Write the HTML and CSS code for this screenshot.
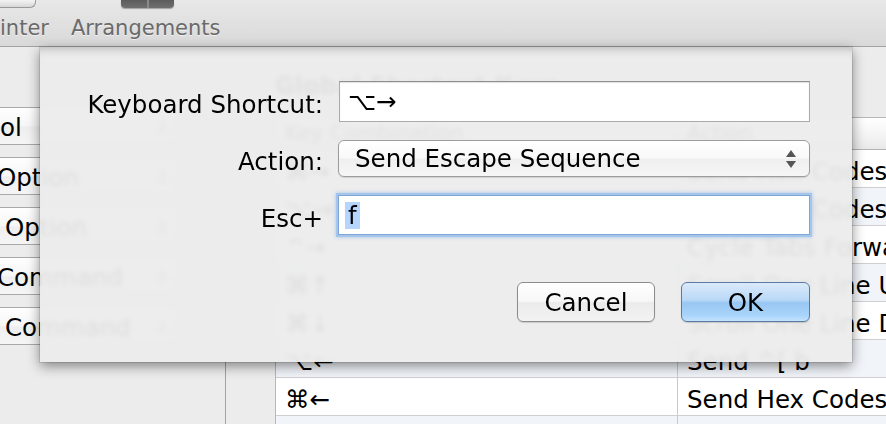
FILE: index.html
```html
<!DOCTYPE html>
<html>
<head>
<meta charset="utf-8">
<link rel="stylesheet" href="styles.css">
</head>
<body>
<div class="window">
  <header class="toolbar">
    <div class="tool tool-cut">
      <div class="icon-printer"></div>
      <span class="tool-label">inter</span>
    </div>
    <div class="tool">
      <div class="icon-arr"><span class="icon-arr-split"></span></div>
      <span class="tool-label">Arrangements</span>
    </div>
  </header>

  <main class="content">
    <aside class="modifiers">
      <div class="mod-popup"><span class="mod-text">ol</span><span class="mod-arrows">▴<br>▾</span></div>
      <div class="mod-popup"><span class="mod-text cut">Option</span><span class="mod-arrows">▴<br>▾</span></div>
      <div class="mod-popup"><span class="mod-text inset">Option</span><span class="mod-arrows">▴<br>▾</span></div>
      <div class="mod-popup"><span class="mod-text cut">Command</span><span class="mod-arrows">▴<br>▾</span></div>
      <div class="mod-popup"><span class="mod-text inset">Command</span><span class="mod-arrows">▴<br>▾</span></div>
    </aside>

    <section class="keys">
      <h2 class="keys-title">Global Shortcut Keys</h2>
      <div class="keys-table">
        <div class="keys-row keys-head"><div class="cell key">Key Combination</div><div class="cell act">Action</div></div>
        <div class="keys-row"><div class="cell key">⌘→</div><div class="cell act">Send Hex Codes</div></div>
        <div class="keys-row alt"><div class="cell key">⌥→</div><div class="cell act">Send Hex Codes</div></div>
        <div class="keys-row"><div class="cell key">^→</div><div class="cell act">Cycle Tabs Forward</div></div>
        <div class="keys-row alt"><div class="cell key">⌘↑</div><div class="cell act">Scroll One Line Up</div></div>
        <div class="keys-row"><div class="cell key">⌘↓</div><div class="cell act">Scroll One Line Down</div></div>
        <div class="keys-row alt"><div class="cell key">⌥←</div><div class="cell act">Send ^[ b</div></div>
        <div class="keys-row"><div class="cell key">⌘←</div><div class="cell act">Send Hex Codes</div></div>
        <div class="keys-row alt"><div class="cell key"></div><div class="cell act"></div></div>
      </div>
    </section>
  </main>

  <div class="sheet">
    <div class="form">
      <label class="form-label">Keyboard Shortcut:</label>
      <div class="field">⌥→</div>

      <label class="form-label">Action:</label>
      <div class="popup">
        <span>Send Escape Sequence</span>
        <svg class="popup-arrows" width="12" height="20" viewBox="0 0 12 20">
          <path d="M6 1 L11 8 L1 8 Z" fill="#555"/>
          <path d="M6 19 L11 12 L1 12 Z" fill="#555"/>
        </svg>
      </div>

      <label class="form-label">Esc+</label>
      <div class="field field-focus"><span class="sel">f</span></div>
    </div>
    <div class="buttons">
      <button class="btn">Cancel</button>
      <button class="btn btn-default">OK</button>
    </div>
  </div>
</div>
</body>
</html>
```

FILE: styles.css
```css
* { box-sizing: border-box; }

html, body {
  margin: 0;
  padding: 0;
}

body {
  width: 886px;
  height: 424px;
  overflow: hidden;
  background: #ececec;
  font-family: "DejaVu Sans", "Noto Sans", sans-serif;
  color: #000;
}

.window {
  position: relative;
  width: 886px;
  height: 424px;
  overflow: hidden;
  background: #ececec;
}

/* ---------- toolbar ---------- */
.toolbar {
  height: 47px;
  display: flex;
  gap: 22px;
  background: linear-gradient(#e8e8e8, #d9d9d9);
  border-bottom: 1px solid #a3a3a3;
}

.tool {
  display: flex;
  flex-direction: column;
  align-items: center;
}

.tool-cut {
  align-items: flex-start;
}

.tool-label {
  font-size: 21px;
  line-height: 24px;
  color: #6a6a6a;
  margin-top: 8px;
  text-shadow: 0 1px 0 rgba(255,255,255,0.6);
}

.icon-printer {
  width: 36px;
  height: 8px;
  background: linear-gradient(#f4f4f4, #d8d8d8);
  border: 1px solid #9a9a9a;
  border-top: none;
  border-left: none;
  border-radius: 0 0 6px 0;
}

.icon-arr {
  width: 53px;
  height: 8px;
  margin-left: 4px;
  background: linear-gradient(#5c5c5c, #6f6f6f);
  border-radius: 0 0 4px 4px;
  display: flex;
  justify-content: center;
  box-shadow: 0 1px 1px rgba(0,0,0,0.3);
}

.icon-arr-split {
  width: 2px;
  height: 100%;
  background: #8a8a8a;
}

/* ---------- window content ---------- */
.content {
  display: flex;
  height: 377px;
}

.modifiers {
  width: 226px;
  flex: none;
  border-right: 1px solid #a2a2a2;
  padding-top: 60px;
  display: flex;
  flex-direction: column;
  gap: 12px;
}

.mod-popup {
  width: 178px;
  height: 38px;
  border: 1px solid #a9a9a9;
  border-left: none;
  border-radius: 0 6px 6px 0;
  background: linear-gradient(#ffffff, #f6f6f6 50%, #eeeeee 52%, #f5f5f5);
  display: flex;
  align-items: center;
  justify-content: space-between;
  padding-right: 12px;
  font-size: 24.5px;
  line-height: 36px;
}

.mod-text { padding-top: 3px; }
.mod-text.cut { margin-left: -3px; }
.mod-text.inset { margin-left: 5px; }

.mod-arrows {
  font-size: 11px;
  line-height: 9px;
  color: #666;
  text-align: center;
}

.keys {
  flex: 1;
  padding-left: 49px;
}

.keys-title {
  margin: 25px 0 17px 0;
  font-size: 24px;
  line-height: 28px;
  font-weight: bold;
  color: #333;
}

.keys-table {
  border-top: 1px solid #b7b7b7;
  border-left: 1px solid #b7b7b7;
  width: 700px;
}

.keys-row {
  display: flex;
  height: 38px;
  border-bottom: 1px solid #cfcfcf;
  background: #fff;
  font-size: 24.5px;
  line-height: 37px;
}

.keys-row.alt {
  background: #f1f4f9;
}

.keys-head {
  height: 32px;
  line-height: 31px;
  font-size: 21px;
  color: #333;
  background: linear-gradient(#ffffff, #f3f3f3 60%, #e9e9e9);
  border-bottom: 1px solid #b3b3b3;
}

.cell {
  padding-left: 9px;
  white-space: nowrap;
}

.keys-row:not(.keys-head) .cell {
  padding-top: 3px;
}

.cell.key {
  width: 402px;
  flex: none;
  border-right: 1px solid #c9c9c9;
}

.cell.act {
  flex: 1;
}

/* ---------- sheet ---------- */
.sheet {
  position: absolute;
  left: 40px;
  top: 47px;
  width: 812px;
  height: 315px;
  background: rgba(236, 236, 236, 0.94);
  backdrop-filter: blur(2.5px);
  box-shadow:
    0 4px 12px rgba(0, 0, 0, 0.45),
    0 0 0 1px rgba(0, 0, 0, 0.1),
    inset 0 10px 10px -8px rgba(0, 0, 0, 0.22);
  padding: 34px 42px 0 0;
  display: flex;
  flex-direction: column;
}

.form {
  display: grid;
  grid-template-columns: 283px 472px;
  column-gap: 15px;
  row-gap: 18px;
  align-items: center;
}

.form-label {
  text-align: right;
  font-size: 24.5px;
  line-height: 30px;
  white-space: nowrap;
  padding-top: 7px;
}

.field {
  height: 41px;
  background: #fff;
  border: 1px solid #aaaaaa;
  border-top-color: #8f8f8f;
  box-shadow: inset 0 1px 1px rgba(0, 0, 0, 0.12);
  padding-left: 8px;
  font-size: 24.5px;
  line-height: 39px;
  margin-left: 1px;
}

.field-focus {
  height: 40px;
  margin-left: 0;
  border: 1px solid #7ea6d6;
  box-shadow: 0 0 0 2px #a5c6ec, 0 0 4px 2px rgba(80, 140, 215, 0.45);
  padding-left: 6px;
  line-height: 36px;
}

.sel {
  display: inline-block;
  background: #b5d5fd;
  padding: 0 3px;
  line-height: 27px;
  vertical-align: middle;
}

.popup {
  height: 37px;
  border: 1px solid #9c9c9c;
  border-radius: 6px;
  background: linear-gradient(#ffffff, #f9f9f9 48%, #efefef 52%, #f6f6f6);
  box-shadow: 0 1px 1px rgba(0, 0, 0, 0.12);
  display: flex;
  align-items: center;
  justify-content: space-between;
  padding: 0 12px 0 16px;
  font-size: 24.5px;
}

.popup-arrows {
  display: block;
}

.buttons {
  display: flex;
  justify-content: flex-end;
  gap: 26px;
  margin-top: 47px;
}

.btn {
  height: 40px;
  width: 138px;
  font-family: "DejaVu Sans", "Noto Sans", sans-serif;
  font-size: 24.5px;
  color: #000;
  border: 1px solid #8c8c8c;
  border-radius: 6px;
  background: linear-gradient(#ffffff, #f7f7f7 48%, #ebebeb 52%, #f3f3f3);
  box-shadow: 0 1px 1px rgba(0, 0, 0, 0.15);
  padding: 0;
}

.btn-default {
  width: 129px;
  border-color: #5b7aa3;
  background: linear-gradient(#dbeafb, #b9d8f6 45%, #98c7f3 52%, #a9d4fa 85%, #c4e2fd);
}
```
